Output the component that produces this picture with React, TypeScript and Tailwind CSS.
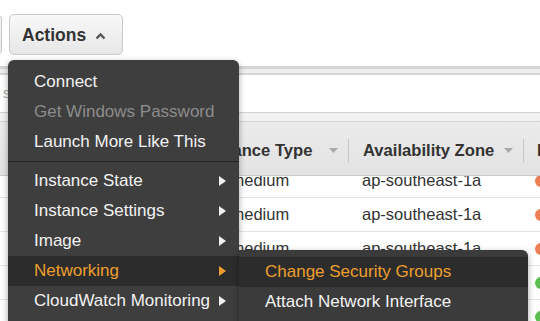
import React from 'react';

const rows = [
  { type: 'm3.medium', zone: 'ap-southeast-1a', status: 'stopped' },
  { type: 'm3.medium', zone: 'ap-southeast-1a', status: 'stopped' },
  { type: 'm3.medium', zone: 'ap-southeast-1a', status: 'stopped' },
  { type: 't2.micro', zone: 'ap-southeast-1a', status: 'running' },
  { type: 't2.micro', zone: 'ap-southeast-1a', status: 'running' },
];

function SortArrow() {
  return (
    <svg width="9" height="6" viewBox="0 0 9 6" className="shrink-0">
      <polygon points="0,0 9,0 4.5,5" fill="#a9a9a9" />
    </svg>
  );
}

function SubArrow({ active }: { active?: boolean }) {
  return (
    <svg width="7" height="10" viewBox="0 0 7 10" className="shrink-0">
      <polygon points="0,0 7,5 0,10" fill={active ? '#ec9f2c' : '#f2f2f2'} />
    </svg>
  );
}

function MenuItem({
  label,
  sub,
  active,
  disabled,
}: {
  label: string;
  sub?: boolean;
  active?: boolean;
  disabled?: boolean;
}) {
  return (
    <div
      className={`h-[30px] flex items-center justify-between pl-[26px] pr-[13px] whitespace-nowrap ${
        active ? 'bg-[#2c2c2c] text-[#ec9f2c]' : disabled ? 'text-[#8c8c8c]' : 'text-[#f2f2f2]'
      }`}
    >
      <span>{label}</span>
      {sub && <SubArrow active={active} />}
    </div>
  );
}

export default function App() {
  return (
    <div
      className="relative w-[540px] h-[321px] overflow-hidden bg-white text-[#333]"
      style={{ fontFamily: '"Liberation Sans", Arial, sans-serif' }}
    >
      {/* toolbar */}
      <div className="h-[66px] flex gap-[7px] pt-[14px]">
        <div className="shrink-0 w-[40px] -ml-[38px] h-[41px] rounded-[5px] border border-[#c8c8c8] bg-gradient-to-b from-[#f8f8f8] to-[#e8e8e8]" />
        <div className="shrink-0 w-[114px] h-[41px] rounded-[5px] border border-[#c8c8c8] bg-gradient-to-b from-[#f8f8f8] to-[#e7e7e7] flex items-center pl-[12px] pt-[2px] gap-[9px]">
          <span className="text-[17.5px] font-bold text-[#333]">Actions</span>
          <svg width="11" height="8" viewBox="0 0 11 8">
            <polyline points="1.5,6.5 5.5,2.5 9.5,6.5" fill="none" stroke="#555" strokeWidth="2.4" />
          </svg>
        </div>
      </div>

      {/* double rule */}
      <div className="h-[9px] border-t-[3px] border-b-[2px] border-[#d6d6d6] bg-[#ededed]" />

      {/* filter */}
      <div className="h-[37px] flex items-center pl-[3px] text-[14px] text-[#aaa]">search</div>

      {/* table */}
      <div className="h-[10px] border-t border-b border-[#d2d2d2] bg-[#f2f2f2]" />
      <div className="relative z-10 h-[54px] pt-[5px] flex items-center bg-gradient-to-b from-[#ebebeb] to-[#e3e3e3] border-b border-[#cccccc] text-[16.6px] font-bold text-[#333] whitespace-nowrap">
        <div className="shrink-0 w-[190px]" />
        <div className="shrink-0 w-[158px] flex items-center justify-between pl-[13px] pr-[10px]">
          <span>Instance Type</span>
          <SortArrow />
        </div>
        <div className="shrink-0 w-[175px] flex items-center">
          <div className="shrink-0 w-px h-[24px] bg-[#c8c8c8]" />
          <div className="flex-1 flex items-center justify-between pl-[14px] pr-[10px]">
            <span>Availability Zone</span>
            <SortArrow />
          </div>
        </div>
        <div className="shrink-0 flex items-center">
          <div className="shrink-0 w-px h-[24px] bg-[#c8c8c8]" />
          <span className="pl-[13px]">Instance State</span>
        </div>
      </div>
      <div className="-mt-[12px] text-[16.5px] text-[#333] whitespace-nowrap">
        {rows.map((r, i) => (
          <div key={i} className="h-[34px] flex items-center border-b border-[#e4e4e4]">
            <div className="shrink-0 w-[190px]" />
            <div className="shrink-0 w-[158px] pl-[13px]">{r.type}</div>
            <div className="shrink-0 w-[175px] pl-[14px]">{r.zone}</div>
            <div className="shrink-0 pl-[12px]">
              <div
                className={`w-[12px] h-[12px] rounded-full ${
                  r.status === 'running' ? 'bg-[#5bbf4f]' : 'bg-[#ee7f53]'
                }`}
              />
            </div>
          </div>
        ))}
      </div>

      {/* actions menu */}
      <div className="absolute z-20 left-[8px] top-[60px] w-[231px] h-[280px] rounded-[6px] bg-[#3e3e3e] pt-[7px] text-[17px] shadow-[0_2px_6px_rgba(0,0,0,0.35)]">
        <MenuItem label="Connect" />
        <MenuItem label="Get Windows Password" disabled />
        <MenuItem label="Launch More Like This" />
        <div className="my-[4px] h-px bg-[#252525]" />
        <MenuItem label="Instance State" sub />
        <MenuItem label="Instance Settings" sub />
        <MenuItem label="Image" sub />
        <MenuItem label="Networking" sub active />
        <MenuItem label="CloudWatch Monitoring" sub />
      </div>

      {/* networking submenu */}
      <div className="absolute z-20 left-[239px] top-[250px] w-[289px] h-[100px] rounded-r-[6px] bg-[#3b3b3b] pt-[7px] text-[17px] shadow-[0_2px_6px_rgba(0,0,0,0.35)]">
        <MenuItem label="Change Security Groups" active />
        <MenuItem label="Attach Network Interface" />
      </div>
    </div>
  );
}
